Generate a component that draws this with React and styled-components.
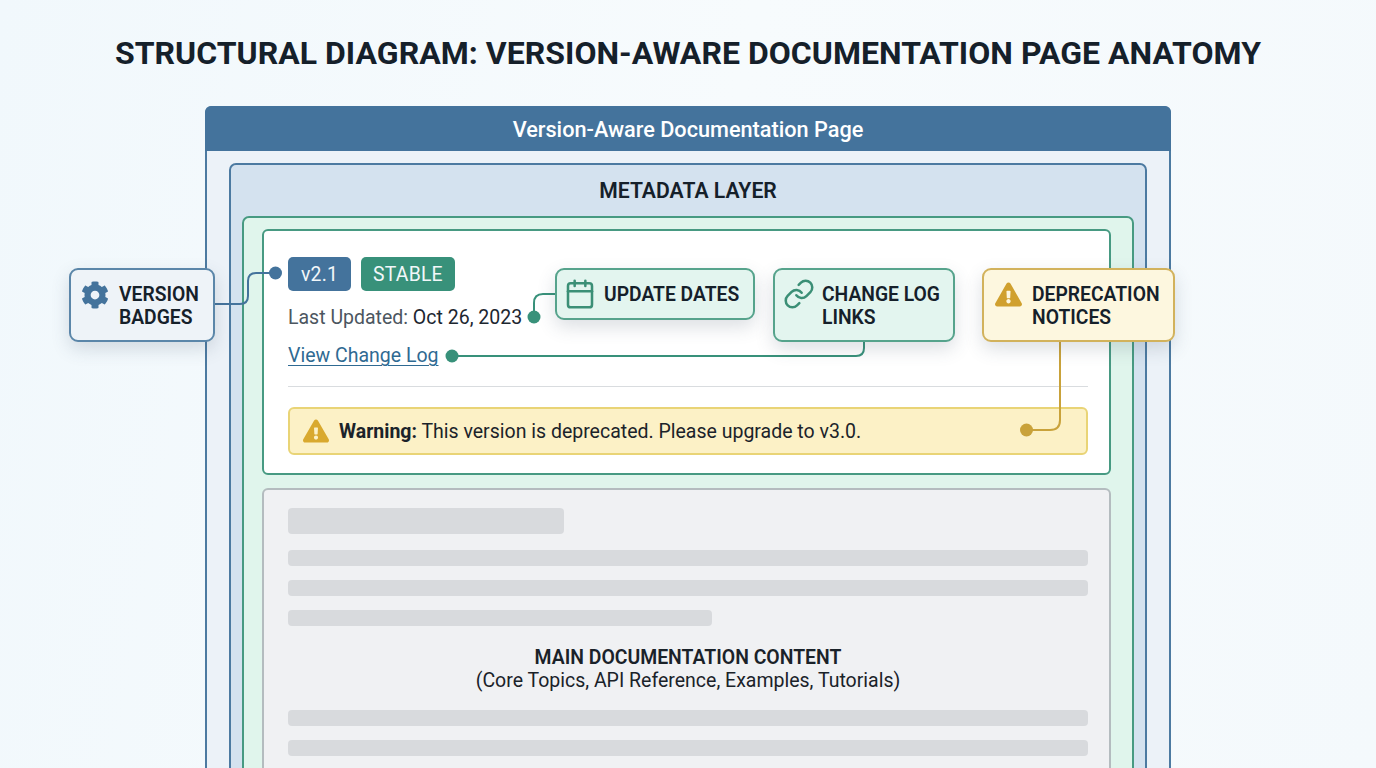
import React from "react";
import styled, { createGlobalStyle } from "styled-components";
import { FaCog, FaExclamationTriangle } from "react-icons/fa";
import { Calendar, Link as LinkIcon } from "lucide-react";

const Global = createGlobalStyle`
  html, body { margin: 0; padding: 0; }
  body { font-family: Roboto, "Liberation Sans", sans-serif; color: #15202a; }
`;

const Page = styled.div`
  position: relative;
  width: 1376px;
  height: 768px;
  overflow: hidden;
  background: linear-gradient(100deg, #f1f8fc 0%, #f7fbfd 50%, #f4f9fc 100%);
  display: flex;
  flex-direction: column;
  align-items: center;
`;

const Title = styled.h1`
  margin: 0;
  flex: none;
  height: 106px;
  padding-top: 33px;
  box-sizing: border-box;
  font-size: 32px;
  line-height: 40px;
  font-weight: 700;
  letter-spacing: 0.03px;
  color: #15202a;
  white-space: nowrap;
`;

const Frame = styled.section`
  width: 966px;
  flex: none;
  box-sizing: border-box;
  border: 2px solid #4c7aa1;
  border-radius: 7px 7px 0 0;
  background: #ecf2f8;
`;

const FrameHeader = styled.header`
  height: 45px;
  margin: -2px -2px 0;
  padding-top: 1px;
  box-sizing: border-box;
  border-radius: 6px 6px 0 0;
  background: #44739c;
  color: #fff;
  font-size: 21.7px;
  font-weight: 500;
  display: flex;
  align-items: center;
  justify-content: center;
`;

const MetaLayer = styled.div`
  margin: 12px 22px 0;
  border: 2px solid #4c7aa1;
  border-radius: 7px 7px 0 0;
  background: #d4e2ef;
  padding: 0 11px;
`;

const LayerTitle = styled.div`
  height: 51px;
  display: flex;
  align-items: center;
  justify-content: center;
  font-size: 21.2px;
  font-weight: 600;
`;

const GreenLayer = styled.div`
  border: 2px solid #479a82;
  border-radius: 7px 7px 0 0;
  background: #e0f5ec;
  padding: 11px 21px 0 18px;
`;

const MetaCard = styled.div`
  height: 246px;
  box-sizing: border-box;
  border: 2px solid #479a82;
  border-radius: 6px;
  background: #fff;
  padding: 26px 21px 0 24px;
  display: flex;
  flex-direction: column;
`;

const BadgeRow = styled.div`
  display: flex;
  gap: 10px;
  height: 34px;
  flex: none;
`;

const Badge = styled.span`
  height: 34px;
  padding: 0 ${(p) => p.$pad}px;
  border-radius: 5px;
  background: ${(p) => p.$bg};
  color: #f2f7f9;
  font-size: 19.4px;
  letter-spacing: 0.2px;
  display: flex;
  align-items: center;
`;

const Updated = styled.div`
  margin-top: 15px;
  height: 24px;
  flex: none;
  line-height: 24px;
  font-size: 19.5px;
  color: #1d2730;
`;

const Muted = styled.span`
  color: #4c5660;
`;

const ChangeLink = styled.a`
  margin-top: 14px;
  height: 24px;
  flex: none;
  line-height: 24px;
  font-size: 19.5px;
  color: #2f6a92;
  text-decoration: underline;
  text-underline-offset: 3px;
  text-decoration-thickness: 1px;
  align-self: flex-start;
`;

const Divider = styled.hr`
  margin: 18px 0 0;
  border: 0;
  height: 1px;
  background: #d9dcdf;
  flex: none;
`;

const WarningBar = styled.div`
  margin-top: 20px;
  height: 48px;
  flex: none;
  box-sizing: border-box;
  border: 2px solid #e9d476;
  border-radius: 6px;
  background: #fcf1c6;
  padding-left: 13px;
  display: flex;
  align-items: center;
  gap: 10px;
  font-size: 19.5px;
  color: #1b232a;
  svg { color: #d9a92e; flex: none; }
  b { font-weight: 700; }
`;

const ContentCard = styled.div`
  margin-top: 13px;
  height: 400px;
  box-sizing: border-box;
  border: 2px solid #b4bcbf;
  border-radius: 6px 6px 0 0;
  background: #f0f1f3;
  padding: 18px 21px 0 24px;
`;

const Bar = styled.div`
  height: ${(p) => p.$h || 16}px;
  width: ${(p) => p.$w || "800px"};
  margin-top: ${(p) => p.$mt ?? 14}px;
  border-radius: 4px;
  background: #d8dadd;
`;

const ContentLabel = styled.div`
  margin-top: 20px;
  height: 64px;
  text-align: center;
  font-size: 19.5px;
  line-height: 23px;
  color: #1a2229;
  b { display: block; font-weight: 600; font-size: 19.4px; }
`;

const Callout = styled.div`
  position: absolute;
  top: 268px;
  left: ${(p) => p.$left}px;
  width: ${(p) => p.$width}px;
  height: ${(p) => p.$height}px;
  box-sizing: border-box;
  border: 2px solid ${(p) => p.$border};
  border-radius: 9px;
  background: ${(p) => p.$bg};
  box-shadow: 0 7px 18px rgba(60, 80, 100, 0.18);
  display: flex;
  align-items: flex-start;
  gap: ${(p) => p.$gap}px;
  padding: 13px 0 0 ${(p) => p.$pad}px;
  font-size: 19.3px;
  line-height: 23px;
  font-weight: 600;
  color: #15202a;
  svg { flex: none; color: ${(p) => p.$icon}; margin-top: -2px; }
`;

const LineIcon = styled.span`
  flex: none;
  height: 32px;
  margin-top: -3px;
  svg { display: block; }
`;

const Wires = styled.svg`
  position: absolute;
  left: 0;
  top: 0;
  pointer-events: none;
`;

export default function App() {
  return (
    <Page>
      <Global />
      <Title>STRUCTURAL DIAGRAM: VERSION-AWARE DOCUMENTATION PAGE ANATOMY</Title>
      <Frame>
        <FrameHeader>Version-Aware Documentation Page</FrameHeader>
        <MetaLayer>
          <LayerTitle>METADATA LAYER</LayerTitle>
          <GreenLayer>
            <MetaCard>
              <BadgeRow>
                <Badge $bg="#44739c" $pad={13}>v2.1</Badge>
                <Badge $bg="#38917a" $pad={12}>STABLE</Badge>
              </BadgeRow>
              <Updated><Muted>Last Updated:</Muted> Oct 26, 2023</Updated>
              <ChangeLink>View Change Log</ChangeLink>
              <Divider />
              <WarningBar>
                <FaExclamationTriangle size={26} />
                <span><b>Warning:</b> This version is deprecated. Please upgrade to v3.0.</span>
              </WarningBar>
            </MetaCard>
            <ContentCard>
              <Bar $w="276px" $h={26} $mt={0} />
              <Bar $mt={16} />
              <Bar />
              <Bar $w="424px" />
              <ContentLabel>
                <b>MAIN DOCUMENTATION CONTENT</b>
                (Core Topics, API Reference, Examples, Tutorials)
              </ContentLabel>
              <Bar $mt={0} />
              <Bar />
            </ContentCard>
          </GreenLayer>
        </MetaLayer>
      </Frame>

      <Wires width="1376" height="768" viewBox="0 0 1376 768" fill="none">
        <path d="M215 304H240Q248 304 248 296V281Q248 273 256 273H275" stroke="#44739c" strokeWidth="2" />
        <circle cx="275.500" cy="273" r="6.500" fill="#44739c" />
        <path d="M534 317V303Q534 294 543 294H556" stroke="#38917a" strokeWidth="2" />
        <circle cx="534" cy="317" r="6.500" fill="#38917a" />
        <path d="M452 356H856Q864 356 864 348V341" stroke="#38917a" strokeWidth="2" />
        <circle cx="452" cy="356" r="6.500" fill="#38917a" />
        <path d="M1060 341V420Q1060 430 1050 430H1026" stroke="#c9a23a" strokeWidth="2" />
        <circle cx="1026.500" cy="430" r="6.500" fill="#c9a23a" />
      </Wires>

      <Callout $left={69} $width={146} $height={74} $border="#5b86a9" $bg="#eef3f8" $icon="#44739c" $pad={10} $gap={10}>
        <FaCog size={28} />
        <span>VERSION<br />BADGES</span>
      </Callout>
      <Callout $left={555} $width={200} $height={52} $border="#56a38c" $bg="#e3f5ef" $icon="#3b8f76" $pad={7} $gap={8}>
        <LineIcon><Calendar size={32} strokeWidth={1.9} /></LineIcon>
        <span>UPDATE DATES</span>
      </Callout>
      <Callout $left={773} $width={182} $height={74} $border="#56a38c" $bg="#e3f5ef" $icon="#3b8f76" $pad={8} $gap={7}>
        <LineIcon><LinkIcon size={32} strokeWidth={1.9} /></LineIcon>
        <span>CHANGE LOG<br />LINKS</span>
      </Callout>
      <Callout $left={982} $width={193} $height={74} $border="#d2b25c" $bg="#fdf7df" $icon="#d0a02e" $pad={11} $gap={10}>
        <FaExclamationTriangle size={27} />
        <span>DEPRECATION<br />NOTICES</span>
      </Callout>
    </Page>
  );
}
